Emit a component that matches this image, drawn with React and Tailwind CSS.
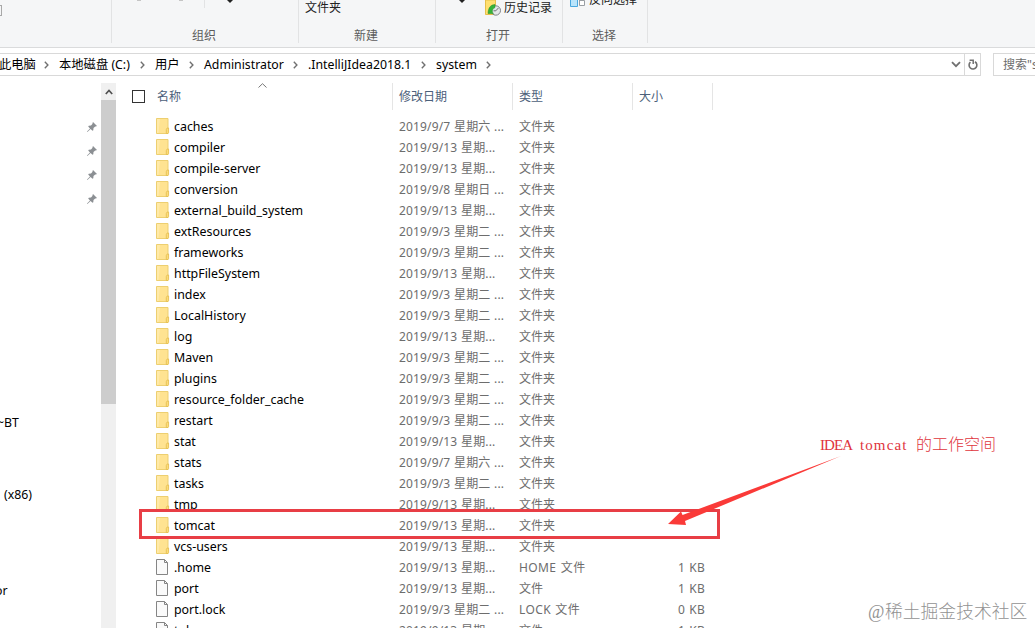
import React from "react";

const files = [
    { name: "caches", date: "2019/9/7 星期六 ...", type: "文件夹" },
    { name: "compiler", date: "2019/9/13 星期...", type: "文件夹" },
    { name: "compile-server", date: "2019/9/13 星期...", type: "文件夹" },
    { name: "conversion", date: "2019/9/8 星期日 ...", type: "文件夹" },
    { name: "external_build_system", date: "2019/9/13 星期...", type: "文件夹" },
    { name: "extResources", date: "2019/9/3 星期二 ...", type: "文件夹" },
    { name: "frameworks", date: "2019/9/3 星期二 ...", type: "文件夹" },
    { name: "httpFileSystem", date: "2019/9/13 星期...", type: "文件夹" },
    { name: "index", date: "2019/9/3 星期二 ...", type: "文件夹" },
    { name: "LocalHistory", date: "2019/9/3 星期二 ...", type: "文件夹" },
    { name: "log", date: "2019/9/13 星期...", type: "文件夹" },
    { name: "Maven", date: "2019/9/3 星期二 ...", type: "文件夹" },
    { name: "plugins", date: "2019/9/3 星期二 ...", type: "文件夹" },
    { name: "resource_folder_cache", date: "2019/9/3 星期二 ...", type: "文件夹" },
    { name: "restart", date: "2019/9/3 星期二 ...", type: "文件夹" },
    { name: "stat", date: "2019/9/13 星期...", type: "文件夹" },
    { name: "stats", date: "2019/9/7 星期六 ...", type: "文件夹" },
    { name: "tasks", date: "2019/9/3 星期二 ...", type: "文件夹" },
    { name: "tmp", date: "2019/9/13 星期...", type: "文件夹" },
    { name: "tomcat", date: "2019/9/13 星期...", type: "文件夹" },
    { name: "vcs-users", date: "2019/9/13 星期...", type: "文件夹" },
    { name: ".home", date: "2019/9/13 星期...", type: "HOME 文件", size: "1 KB" },
    { name: "port", date: "2019/9/13 星期...", type: "文件", size: "1 KB" },
    { name: "port.lock", date: "2019/9/3 星期二 ...", type: "LOCK 文件", size: "0 KB" },
    { name: "token", date: "2019/9/13 星期...", type: "文件", size: "1 KB" },
];

const crumbs = [
    { label: "此电脑", width: "w-[60px]" },
    { label: "本地磁盘 (C:)", width: "w-[96px]" },
    { label: "用户", width: "w-[49px]" },
    { label: "Administrator", width: "w-[104px]" },
    { label: ".IntelliJIdea2018.1", width: "w-[128px]" },
    { label: "system", width: "w-[65px]" },
];

const FolderIcon = () => (
    <svg width="14" height="16" viewBox="0 0 14 16" className="-mt-0.5 shrink-0">
        <path d="M0.5 0.5H12V15.5H0.5Z" fill="#ffe391" stroke="#edcf70" />
        <path d="M1 1H4L2.5 15H1Z" fill="#ffeaa9" />
        <path d="M10.3 15.5V11.5L11.2 10H12.6V14.5L12 15.5Z" fill="#fbdc7c" stroke="#e3bd4c" strokeWidth="0.8" />
    </svg>
);

const FileIcon = () => (
    <svg width="14" height="16" viewBox="0 0 14 16" className="-mt-0.5 shrink-0">
        <path d="M0.5 0.5H8.5L11.5 3.5V15.5H0.5Z" fill="#fafafa" stroke="#858585" />
        <path d="M8.5 0.5V3.5H11.5" fill="none" stroke="#858585" />
    </svg>
);

const PinIcon = () => (
    <svg width="10" height="10" viewBox="0 0 10 10">
        <path d="M6 0L10 4L8.8 4.6L8.2 4.4L6.5 6.1L6.3 8.3L5.5 8.8L3.6 6.9L0.4 10L0 9.6L3 6.4L1.2 4.5L1.8 3.7L4 3.5L5.6 1.8L5.4 1.2Z" fill="#8b8f93" />
    </svg>
);

const CrumbArrow = () => (
    <svg width="5" height="8" viewBox="0 0 5 8" className="mr-2.5 shrink-0">
        <path d="M0.8 0.8L3.9 4L0.8 7.2" fill="none" stroke="#707070" strokeWidth="1.4" />
    </svg>
);

const HistoryIcon = () => (
    <svg width="17" height="16" viewBox="0 0 17 16">
        <path d="M0.5 0H10.5V14.5H0.5Z" fill="#ffe070" stroke="#e6bf4a" />
        <circle cx="10.8" cy="10.5" r="4.7" fill="#e4e7e8" stroke="#7f8589" />
        <path d="M10.8 10.8L13.4 8M10.8 10.8H8.5" stroke="#697075" fill="none" />
        <path d="M10 4.5C6 4.8 3.3 7 3 13.5H8.5C7 12 6.5 9.5 10 7.5Z" fill="#35b339" stroke="#278a2b" strokeWidth="0.5" />
    </svg>
);

const Ribbon = () => (
    <div className="flex h-12 shrink-0 border-b border-[#dadbdc] bg-[#f5f6f7] pb-1 text-xs text-[#5c5c5c]">
        <div className="flex h-full w-28 border-r border-[#e2e3e4]">
            <div className="mt-[5px] h-[11px] w-0.5 border border-l-0 border-[#a8a8a8]" />
        </div>
        <div className="flex h-full w-[187px] flex-col items-center justify-between border-r border-[#e2e3e4]">
            <div className="flex h-2 w-full items-start">
                <span className="ml-[25px] h-px w-1 bg-[#c5c5c5]" />
                <span className="ml-[38px] h-px w-1 bg-[#c5c5c5]" />
                <span className="ml-[21px] h-2 w-px bg-[#e2e3e4]" />
                <svg width="6" height="3" viewBox="0 0 6 3" className="ml-[22px]">
                    <path d="M0 0H6L3 3Z" fill="#222" />
                </svg>
            </div>
            <span className="-mb-px mr-0.5 h-4 leading-4">组织</span>
        </div>
        <div className="flex h-full w-[137px] flex-col justify-between border-r border-[#e2e3e4]">
            <span className="pl-1.5 leading-4 text-[#222]">文件夹</span>
            <span className="-mb-px mr-0.5 h-4 text-center leading-4">新建</span>
        </div>
        <div className="flex h-full w-[127px] flex-col justify-between border-r border-[#e2e3e4]">
            <div className="flex h-4 items-start">
                <svg width="6" height="3" viewBox="0 0 6 3" className="ml-[23px]">
                    <path d="M0 0H6L3 3Z" fill="#222" />
                </svg>
                <div className="ml-5 flex items-center gap-0.5">
                    <HistoryIcon />
                    <span className="leading-4 text-[#222]">历史记录</span>
                </div>
            </div>
            <span className="-mb-px mr-0.5 h-4 text-center leading-4">打开</span>
        </div>
        <div className="flex h-full w-[85px] flex-col justify-between border-r border-[#e2e3e4]">
            <div className="flex h-2 items-start pl-[7px]">
                <svg width="16" height="8" viewBox="0 0 16 8">
                    <path d="M0.5 0V6.5H7.5V0" fill="#b9e4fb" stroke="#4aa8df" />
                    <path d="M9.5 0V5.5H14.5V0.5H9.5" fill="#fff" stroke="#9a9fa4" />
                </svg>
                <span className="-mt-2 ml-[3px] leading-4 text-[#222]">反向选择</span>
            </div>
            <span className="-mb-px mr-0.5 h-4 text-center leading-4">选择</span>
        </div>
    </div>
);

const AddressBar = () => (
    <div className="flex h-[28px] shrink-0 gap-3 bg-white pt-[5px] text-[12.3px]">
        <div className="flex h-[23px] w-[981px] items-center overflow-hidden border border-l-0 border-[#d9d9d9]">
            <div className="flex flex-1 items-center">
                {crumbs.map((crumb) => (
                    <div key={crumb.label} className={`flex shrink-0 items-center justify-between whitespace-nowrap text-black first:-ml-px ${crumb.width}`}>
                        <span className="leading-5">{crumb.label}</span>
                        <CrumbArrow />
                    </div>
                ))}
            </div>
            <svg width="10" height="7" viewBox="0 0 10 7" className="mr-[3px]">
                <path d="M1 1.2L5 5.2L9 1.2" fill="none" stroke="#707070" strokeWidth="1.8" />
            </svg>
            <div className="flex h-full w-4 items-center justify-center border-l border-[#d9d9d9]">
                <svg width="10" height="12" viewBox="0 0 10 12">
                    <path d="M7 2.8A3.9 3.9 0 1 1 2.4 3.2" fill="none" stroke="#707070" strokeWidth="1.6" />
                    <path d="M1.6 1.2H5.2V5" fill="none" stroke="#707070" strokeWidth="1.5" />
                </svg>
            </div>
        </div>
        <div className="flex h-[23px] flex-1 items-center overflow-hidden whitespace-nowrap border border-r-0 border-[#d9d9d9] pl-[9px] text-xs text-[#6d6d6d]">
            搜索"system"
        </div>
    </div>
);

const Sidebar = () => (
    <div className="flex w-[101px] shrink-0 flex-col text-[12.3px] text-black">
        <div className="flex flex-col items-end gap-3.5 pr-1 pt-[46px]">
            <PinIcon />
            <PinIcon />
            <PinIcon />
            <PinIcon />
        </div>
        <span className="-ml-[3px] mt-[209px] h-5 leading-5">~BT</span>
        <span className="ml-1 mt-[52px] h-5 leading-5">(x86)</span>
        <span className="-ml-[5px] mt-[76px] h-5 leading-5">or</span>
    </div>
);

const ScrollBar = () => (
    <div className="mt-[7px] flex w-[15px] shrink-0 flex-col bg-[#f0f0f0]">
        <div className="flex h-[17px] items-center justify-center">
            <svg width="8" height="6" viewBox="0 0 8 6">
                <path d="M0.8 5L4 1.5L7.2 5" fill="none" stroke="#505050" strokeWidth="1.7" />
            </svg>
        </div>
        <div className="h-[304px] bg-[#cdcdcd]" />
    </div>
);

const ListHeader = () => (
    <div className="relative mt-[7px] flex h-[27px] shrink-0 text-xs leading-[28px] text-[#4c607a]">
        <div className="flex w-[277px] items-center border-r border-[#e5e5e5] pl-4">
            <span className="mr-3 h-[13px] w-[13px] border border-[#333]" />
            名称
        </div>
        <div className="w-[120px] border-r border-[#e5e5e5] pl-1.5">修改日期</div>
        <div className="w-[120px] border-r border-[#e5e5e5] pl-1.5">类型</div>
        <div className="w-20 border-r border-[#e5e5e5] pl-1.5">大小</div>
        <svg width="9" height="5" viewBox="0 0 9 5" className="absolute left-[142px] top-0">
            <path d="M0.5 4.5L4.5 0.7L8.5 4.5" fill="none" stroke="#777" />
        </svg>
    </div>
);

const FileRow = ({ file }) => (
    <div className="flex h-[21px] shrink-0 items-center whitespace-nowrap pl-10 text-xs text-[#6d6d6d]">
        {file.size ? <FileIcon /> : <FolderIcon />}
        <span className="ml-1 w-[225px] pt-0.5 text-[12.4px] text-black">{file.name}</span>
        <span className="w-[120px] tracking-[0.15px] [word-spacing:0.4px]">{file.date}</span>
        <span className="w-[120px]">
            {file.type.includes(" ") ? <span className="tracking-[0.4px] [word-spacing:0.8px]">{file.type}</span> : file.type}
        </span>
        <span className="w-[66px] text-right tracking-[0.2px] [word-spacing:1px]">{file.size}</span>
    </div>
);

const App = () => {
    return (
        <div className="relative flex h-[628px] w-[1035px] flex-col overflow-hidden bg-white font-['Noto_Sans','Noto_Sans_CJK_SC',sans-serif]">
            <Ribbon />
            <AddressBar />
            <div className="flex min-h-0 flex-1 overflow-hidden">
                <Sidebar />
                <ScrollBar />
                <div className="flex flex-1 flex-col overflow-hidden">
                    <ListHeader />
                    <div className="mt-1.5 flex flex-col">
                        {files.map((file) => (
                            <FileRow key={file.name} file={file} />
                        ))}
                    </div>
                </div>
            </div>

            {/* Red annotation over the tomcat row */}
            <div className="absolute left-[139px] top-[509px] h-[30px] w-[581px] border-[3px] border-[#e83e45]" />
            <svg width="175" height="70" viewBox="0 0 175 70" className="absolute left-[668px] top-[456px]">
                <path d="M0 68L13 55.5L14.5 59L173 0L17 65L18 69Z" fill="#fa3a38" />
            </svg>
            <div className="absolute left-[820px] top-[434px] flex items-baseline whitespace-nowrap font-['Liberation_Serif','Noto_Sans_CJK_SC',serif] text-[15px] leading-[22px] text-[#e0343c]">
                <span className="w-10 tracking-[-0.9px]">IDEA</span>
                <span className="w-14 tracking-[1.1px]">tomcat</span>
                <span className="text-base leading-[22px] font-light">的工作空间</span>
            </div>
            <div className="absolute left-[868px] top-[600px] flex items-baseline whitespace-nowrap font-['Liberation_Serif','Noto_Sans_CJK_SC',serif] text-[17.8px] font-light leading-6 text-[#929292]">
                <span className="w-[17px]">@</span>
                <span>稀土掘金技术社区</span>
            </div>
        </div>
    );
};

export default App;
